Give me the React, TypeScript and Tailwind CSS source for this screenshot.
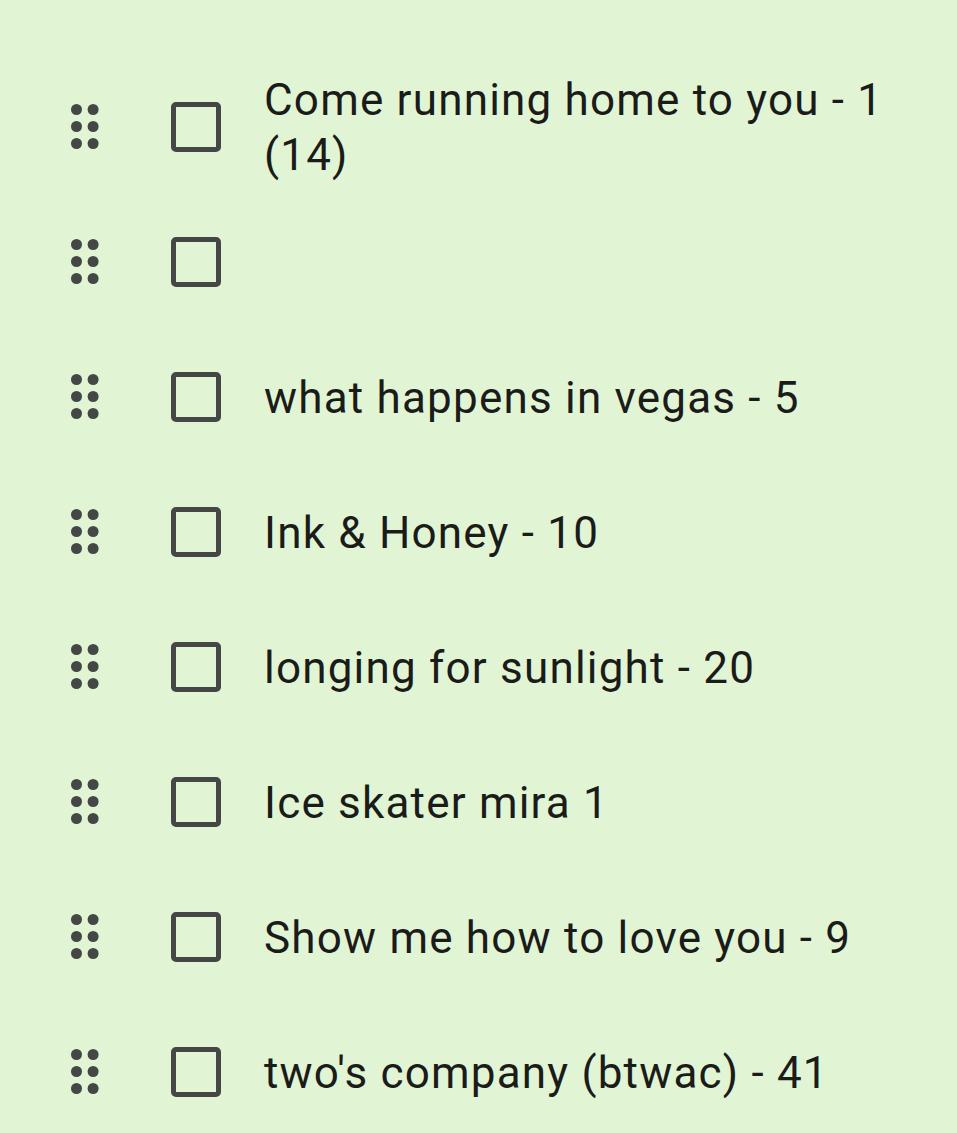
import React from "react";

const items = [
  "Come running home to you - 1 (14)",
  "",
  "what happens in vegas - 5",
  "Ink & Honey - 10",
  "longing for sunlight - 20",
  "Ice skater mira 1",
  "Show me how to love you - 9",
  "two's company (btwac) - 41",
];

function DragHandle() {
  return (
    <svg width="28" height="45" viewBox="0 0 28 45" className="shrink-0">
      {[0, 1, 2].map((r) =>
        [0, 1].map((c) => (
          <circle key={`${r}-${c}`} cx={5.5 + c * 16.6} cy={5.5 + r * 17} r={5.5} fill="#444746" />
        ))
      )}
    </svg>
  );
}

export default function App() {
  return (
    <div
      className="w-[957px] h-[1133px] bg-[#e1f5d4] overflow-hidden pt-[59px]"
      style={{ fontFamily: "Roboto, 'Noto Sans', sans-serif" }}
    >
      {items.map((t, i) => (
        <div key={i} className="flex items-center h-[135px]">
          <div className="ml-[71px] w-[100px] flex items-center">
            <DragHandle />
          </div>
          <div className="w-[50px] h-[50px] shrink-0 border-[5.5px] border-[#444746] rounded-[5px]" />
          <div className="ml-[43px] w-[640px] text-[44px] leading-[55px] tracking-[1.2px] text-[#1b1c1a] pt-[3px]">
            {t}
          </div>
        </div>
      ))}
    </div>
  );
}
